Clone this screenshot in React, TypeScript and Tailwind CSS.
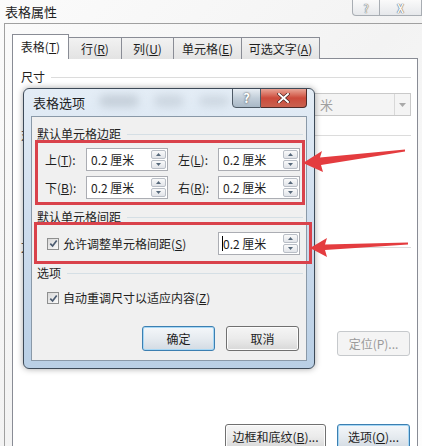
import React from 'react';

const Spinner = () => (
  <div className="flex flex-col w-[15px] h-[19px] mr-[1px] gap-[1px]">
    <div className="flex-1 border border-[#b9bec6] rounded-[2px] bg-linear-to-b from-[#fafafa] to-[#e1e4e9] flex items-center justify-center">
      <svg width="5" height="3" viewBox="0 0 5 3"><path d="M0 3 L2.5 0 L5 3Z" fill="#56687a" /></svg>
    </div>
    <div className="flex-1 border border-[#b9bec6] rounded-[2px] bg-linear-to-b from-[#fafafa] to-[#e1e4e9] flex items-center justify-center">
      <svg width="5" height="3" viewBox="0 0 5 3"><path d="M0 0 L2.5 3 L5 0Z" fill="#56687a" /></svg>
    </div>
  </div>
);

const NumBox = ({ caret }: { caret?: boolean }) => (
  <div className="w-[82px] h-[23px] bg-white border border-[#abadb3] flex items-center pl-[3px]">
    {caret && <span className="w-px h-[15px] bg-black" />}
    <span className={`flex-1 text-[12px] text-[#1e1e1e] ${caret ? '' : 'pl-px'}`}>0.2 厘米</span>
    <Spinner />
  </div>
);

const Check = () => (
  <div className="w-[12px] h-[12px] border border-[#8e8f8f] bg-linear-to-br from-[#d8d8d8] to-[#fbfbfb] flex items-center justify-center">
    <svg width="9" height="9" viewBox="0 0 9 9">
      <path d="M1.3 4.6 L3.6 7 L7.7 1.6" stroke="#4b5b70" strokeWidth="1.7" fill="none" />
    </svg>
  </div>
);

const Group = ({ label, line = '#d5dfe5' }: { label: string; line?: string }) => (
  <div className="h-[18px] flex items-center gap-[6px]">
    <span>{label}</span>
    <div className="flex-1 h-px" style={{ background: line }} />
  </div>
);

const Btn = ({ children, w, primary, disabled }: { children: React.ReactNode; w: string; primary?: boolean; disabled?: boolean }) => (
  <div
    className={`${w} h-[25px] rounded-[3px] flex items-center justify-center text-[12px] border ${
      disabled
        ? 'border-[#c6c9cc] bg-[#f4f4f4] text-[#9a9a9a]'
        : primary
        ? 'border-[#3c7fb1] bg-linear-to-b from-[#f4f7fa] via-[#e6ebf0] to-[#d3dbe3] text-[#1e1e1e] shadow-[inset_0_0_0_1px_#a6d7f5]'
        : 'border-[#707070] bg-linear-to-b from-[#f5f5f5] via-[#ebebeb] to-[#d8d8d8] text-[#1e1e1e] shadow-[inset_0_0_0_1px_#fcfcfc]'
    }`}
  >
    {children}
  </div>
);

const tabs = [
  { t: '行', k: 'R', w: 'w-[54px]' },
  { t: '列', k: 'U', w: 'w-[53px]' },
  { t: '单元格', k: 'E', w: 'w-[69px]' },
  { t: '可选文字', k: 'A', w: 'w-[79px]' },
];

const OptionsDialog = () => (
  <div className="absolute left-[23px] top-[88px] w-[292px] h-[281px] rounded-[6px] border border-[#3d4a58] bg-linear-to-b from-[#e4edf6] via-[#cddced] to-[#b9cfe5] shadow-[0_0_6px_rgba(0,0,0,0.35)] flex flex-col">
    {/* title bar */}
    <div className="relative h-[27px] flex items-center pl-[9px] overflow-hidden">
      <div className="absolute left-[75px] top-[6px] w-[40px] h-[12px] rounded-full bg-[#9aa5b0] opacity-40 blur-[4px]" />
      <div className="absolute left-[130px] top-[6px] w-[30px] h-[12px] rounded-full bg-[#9aa5b0] opacity-30 blur-[4px]" />
      <div className="absolute left-[175px] top-[7px] w-[30px] h-[10px] rounded-full bg-[#9aa5b0] opacity-30 blur-[4px]" />
      <span className="relative text-[13px] text-[#1e1e1e]">表格选项</span>
      <div className="absolute right-[7px] top-[-1px] flex">
        <div className="w-[29px] h-[20px] rounded-bl-[4px] border border-[#4e5a66] bg-linear-to-b from-[#e8eef4] via-[#c2ced9] to-[#a9b8c6] flex items-center justify-center text-[13px] font-bold text-white [text-shadow:0_0_2px_#333]">
          ?
        </div>
        <div className="w-[46px] h-[20px] rounded-br-[4px] border border-l-0 border-[#4e2a28] bg-linear-to-b from-[#e8a496] via-[#cc4a3b] to-[#c9614f] flex items-center justify-center">
          <svg width="13" height="10" viewBox="0 0 13 10">
            <path d="M2 1 L11 9 M11 1 L2 9" stroke="#3a1a18" strokeWidth="3.2" strokeLinecap="square" />
            <path d="M2 1 L11 9 M11 1 L2 9" stroke="#fff" strokeWidth="2" strokeLinecap="square" />
          </svg>
        </div>
      </div>
    </div>
    {/* client */}
    <div className="mx-[7px] mb-[7px] flex-1 bg-[#f0f0f0] border border-[#8a99a8] pl-[5px] pr-[3px] pt-[8px] text-[12px] text-[#1e1e1e] flex flex-col">
      <Group label="默认单元格边距" />
      <div className="mt-[5px] flex flex-col gap-[5px] pl-[8px]">
        <div className="flex items-center h-[23px]">
          <span className="w-[41px]">上(<u>T</u>):</span>
          <NumBox />
          <span className="w-[40px] ml-[10px]">左(<u>L</u>):</span>
          <NumBox />
        </div>
        <div className="flex items-center h-[23px]">
          <span className="w-[41px]">下(<u>B</u>):</span>
          <NumBox />
          <span className="w-[40px] ml-[10px]">右(<u>R</u>):</span>
          <NumBox />
        </div>
      </div>
      <div className="mt-[9px]">
        <Group label="默认单元格间距" />
      </div>
      <div className="mt-[6px] h-[23px] flex items-center pl-[10px] pr-[3px]">
        <Check />
        <span className="ml-[4px]">允许调整单元格间距(<u>S</u>)</span>
        <div className="ml-auto">
          <NumBox caret />
        </div>
      </div>
      <div className="mt-[9px]">
        <Group label="选项" />
      </div>
      <div className="mt-[7px] h-[18px] flex items-center pl-[10px]">
        <Check />
        <span className="ml-[4px]">自动重调尺寸以适应内容(<u>Z</u>)</span>
      </div>
      <div className="mt-[19px] flex justify-end gap-[11px] pr-[4px]">
        <Btn w="w-[73px]" primary>确定</Btn>
        <Btn w="w-[73px]">取消</Btn>
      </div>
    </div>
  </div>
);

// group header of the tab panel that is mostly hidden behind the options dialog
const HiddenGroup = ({ label }: { label: string }) => (
  <div className="h-[18px] flex items-center">
    <div className="w-[4px] overflow-hidden whitespace-nowrap">{label}</div>
    <div className="flex-1 h-px bg-[#dcdcdc]" />
  </div>
);

export default function App() {
  return (
    <div className="relative w-[422px] h-[446px] overflow-hidden bg-linear-to-br from-[#fbfbfb] via-[#f3f3f3] to-[#fdfdfd] font-['Noto_Sans_CJK_SC',sans-serif] text-[12px] text-[#1e1e1e]">
      {/* outer title bar */}
      <div className="h-[23px] flex items-start">
        <span className="mt-[2px] ml-[5px] text-[13px]">表格属性</span>
        <div className="ml-auto flex">
          <div className="w-[28px] h-[16px] rounded-bl-[4px] border border-t-0 border-[#a8adb3] bg-linear-to-b from-[#fafafa] to-[#e6e8eb] flex items-center justify-center text-[11px] leading-[14px] text-[#f8f8f8] [text-shadow:0_0_1px_#555,0_0_1px_#555]">
            ?
          </div>
          <div className="w-[42px] h-[16px] border border-t-0 border-l-0 border-[#a8adb3] bg-linear-to-b from-[#fafafa] to-[#e6e8eb] flex items-center justify-center text-[11px] leading-[14px] font-bold text-[#f8f8f8] [text-shadow:0_0_1px_#555,0_0_1px_#555]">
            X
          </div>
        </div>
      </div>

      {/* outer frame */}
      <div className="ml-[4px] h-[423px] border-l border-t border-[#a0a0a0] pl-[7px] pt-[10px] flex flex-col">
        {/* tabs */}
        <div className="flex items-end h-[25px] -mb-px relative z-10">
          <div className="w-[57px] h-[25px] bg-white border border-b-0 border-[#898c95] flex items-center justify-center">
            表格(<u>T</u>)
          </div>
          {tabs.map((t) => (
            <div
              key={t.t}
              className={`${t.w} h-[22px] -ml-px first:ml-0 border border-b-0 border-[#898c95] bg-linear-to-b from-[#f2f2f2] to-[#e3e3e3] flex items-center justify-center`}
            >
              {t.t}(<u>{t.k}</u>)
            </div>
          ))}
        </div>
        {/* panel */}
        <div className="w-[406px] flex-1 bg-white border border-b-0 border-[#898c95] pl-[8px] pr-[6px] pt-[9px] flex flex-col">
          <Group label="尺寸" line="#dcdcdc" />
          <div className="mt-[7px] h-[23px] flex justify-end">
            <div className="w-[97px] h-[23px] border border-[#c9c9c9] bg-[#f4f4f4] flex items-center">
              <span className="flex-1 pl-[5px] text-[#a0a0a0] text-[13px]">米</span>
              <div className="w-[16px] h-full border-l border-[#d8d8d8] flex items-center justify-center">
                <svg width="7" height="4" viewBox="0 0 7 4"><path d="M0 0 L3.5 4 L7 0Z" fill="#a9a9a9" /></svg>
              </div>
            </div>
          </div>
          <div className="mt-[10px]">
            <HiddenGroup label="对齐方式" />
          </div>
          <div className="mt-[94px]">
            <HiddenGroup label="文字环绕" />
          </div>
          <div className="mt-[75px] flex justify-end pr-[1px]">
            <Btn w="w-[73px]" disabled>定位(P)...</Btn>
          </div>
          <div className="mt-[68px] flex justify-end gap-[11px] pr-[1px]">
            <Btn w="w-[101px]">边框和底纹(<u>B</u>)...</Btn>
            <Btn w="w-[73px]" primary>选项(<u>O</u>)...</Btn>
          </div>
        </div>
      </div>

      <OptionsDialog />

      {/* annotations */}
      <div className="absolute left-[35px] top-[140px] w-[270px] h-[65px] border-[3px] border-[#d9424b] pointer-events-none" />
      <div className="absolute left-[34px] top-[222px] w-[278px] h-[42px] border-[3px] border-[#d9424b] pointer-events-none" />
      <svg className="absolute left-0 top-0 pointer-events-none" width="422" height="446" viewBox="0 0 422 446">
        <polygon points="303,163 322,151 320,157.5 405,149.5 405,151.5 321,165 323,172" fill="#e43c3f" />
        <polygon points="310,248 327,238 325,244.5 408,242.5 408,244.5 325,250 327,257" fill="#e43c3f" />
      </svg>
    </div>
  );
}
